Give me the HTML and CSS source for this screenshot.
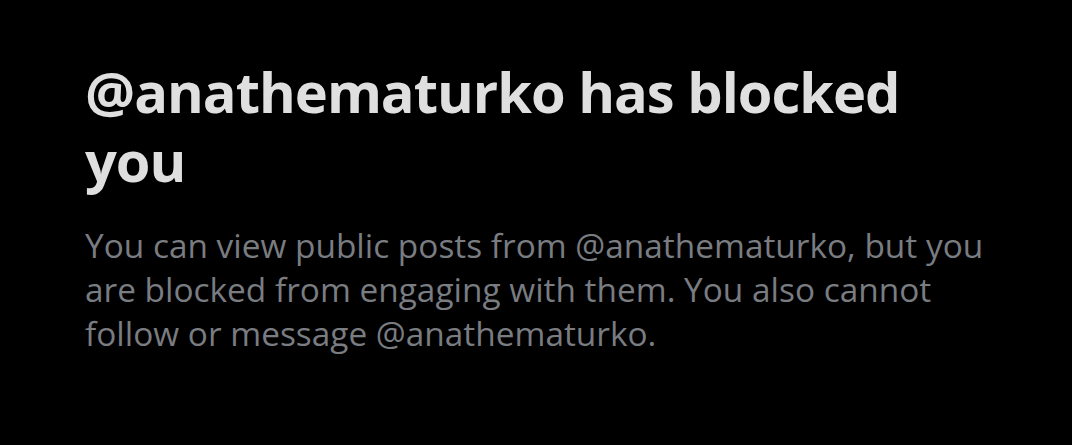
FILE: index.html
```html
<!DOCTYPE html>
<html>
<head>
<meta charset="utf-8">
<link rel="stylesheet" href="styles.css">
</head>
<body>
<div class="notice">
  <h1 class="title">@anathematurko has blocked you</h1>
  <p class="desc">You can view public posts from @anathematurko, but you are blocked from engaging with them. You also cannot follow or message @anathematurko.</p>
</div>
</body>
</html>
```
FILE: styles.css
```css
html, body {
  margin: 0;
  padding: 0;
  background: #000;
}
.notice {
  padding: 57px 0 0 85px;
  width: 915px;
  font-family: "Open Sans", "Liberation Sans", sans-serif;
}
.title {
  margin: 0;
  max-width: 890px;
  font-size: 56px;
  line-height: 69px;
  font-weight: 700;
  letter-spacing: -1px;
  color: #dfdfdf;
}
.desc {
  margin: 28px 0 0 0;
  font-size: 33.4px;
  line-height: 44px;
  font-weight: 400;
  color: #797c81;
}
```
